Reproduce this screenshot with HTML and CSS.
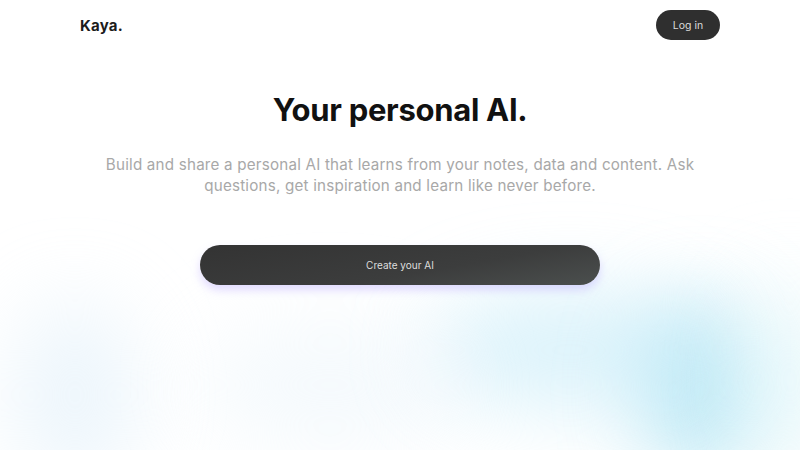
FILE: index.html
```html
<!DOCTYPE html>
<html>
<head>
<meta charset="utf-8">
<link rel="stylesheet" href="styles.css">
</head>
<body>
<div class="page">
  <div class="blobs">
    <div class="blob b1"></div>
    <div class="blob b2"></div>
    <div class="blob b3"></div>
    <div class="blob b4"></div>
    <div class="blob b5"></div>
  </div>
  <header class="header">
    <div class="logo">Kaya.</div>
    <button class="login">Log in</button>
  </header>
  <main class="hero">
    <h1 class="title">Your personal AI.</h1>
    <p class="lead">Build and share a personal AI that learns from your notes, data and content. Ask questions, get inspiration and learn like never before.</p>
    <button class="cta">Create your AI</button>
  </main>
</div>
</body>
</html>
```
FILE: styles.css
```css
* { box-sizing: border-box; }
html, body { margin: 0; padding: 0; }
body {
  font-family: Inter, "Noto Sans", sans-serif;
  background: #fff;
  width: 800px;
  height: 450px;
  overflow: hidden;
}
.page {
  position: relative;
  width: 800px;
  height: 450px;
  overflow: hidden;
}
.blobs {
  position: absolute;
  inset: 0;
  z-index: 0;
}
.blob {
  position: absolute;
  border-radius: 50%;
  filter: blur(40px);
}
.b1 { left: 640px; top: 300px; width: 120px; height: 180px; background: rgba(150, 220, 240, 0.6); }
.b2 { left: 430px; top: 290px; width: 280px; height: 120px; background: rgba(185, 232, 248, 0.5); }
.b3 { left: 10px; top: 300px; width: 130px; height: 190px; background: rgba(215, 235, 248, 0.45); }
.b4 { left: 200px; top: 320px; width: 260px; height: 130px; background: rgba(232, 244, 250, 0.45); }
.b5 { left: 740px; top: 280px; width: 100px; height: 200px; background: rgba(220, 245, 250, 0.5); }
.header {
  position: relative;
  z-index: 1;
  display: flex;
  justify-content: space-between;
  align-items: center;
  padding: 10px 80px 0 80px;
  height: 40px;
}
.logo {
  font-weight: 700;
  font-size: 15px;
  color: #1c1c1c;
  letter-spacing: 0.2px;
}
.login {
  width: 64px;
  height: 30px;
  border: none;
  border-radius: 15px;
  background: #2f2f2f;
  color: #dcdcdc;
  font-family: Inter, sans-serif;
  font-size: 10.5px;
  padding: 0;
}
.hero {
  position: relative;
  z-index: 1;
  display: flex;
  flex-direction: column;
  align-items: center;
  text-align: center;
}
.title {
  margin: 50px 0 0 0;
  font-size: 31px;
  font-weight: 700;
  color: #111;
  letter-spacing: -0.3px;
  line-height: 40px;
}
.lead {
  margin: 24px 0 0 0;
  width: 600px;
  font-size: 15.2px;
  line-height: 21px;
  color: #a8a8a8;
  letter-spacing: 0.2px;
}
.cta {
  margin-top: 49px;
  width: 400px;
  height: 40px;
  border: none;
  border-radius: 20px;
  background: linear-gradient(170deg, #333333 0%, #3c3d3d 60%, #4b4f4e 100%);
  color: #dedede;
  font-family: Inter, sans-serif;
  font-size: 10px;
  box-shadow: 0 5px 10px rgba(170, 150, 255, 0.35);
}
```
